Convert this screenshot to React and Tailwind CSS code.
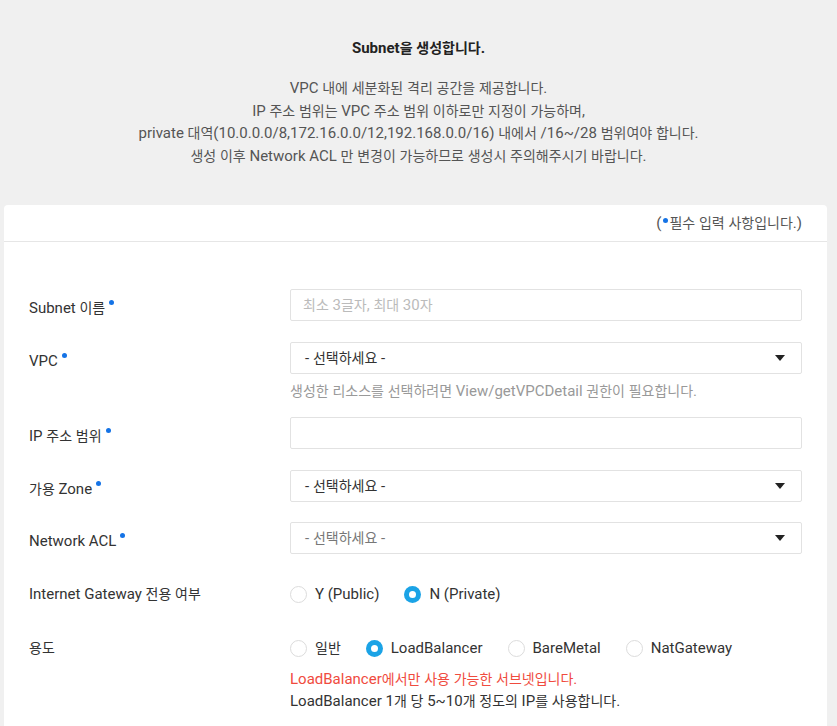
import React from "react";

const font = { fontFamily: 'Roboto, "Noto Sans CJK KR", sans-serif' };

function T({ children }) {
  const parts = String(children).split(/([\u1100-\u11FF\u3130-\u318F\uAC00-\uD7AF]+)/);
  return (
    <>
      {parts.map((p, i) =>
        p === "" ? null : /[\u1100-\u11FF\u3130-\u318F\uAC00-\uD7AF]/.test(p) ? (
          <span key={i} className="text-[14px]">{p}</span>
        ) : (
          <span key={i} className="text-[15px] whitespace-pre">{p}</span>
        )
      )}
    </>
  );
}

function Dot() {
  return <span className="inline-block w-[5px] h-[5px] rounded-full bg-[#1473e6] ml-[4px] relative top-[-5px]" />;
}

function Label({ children, req = true }) {
  return (
    <div className={req ? "w-[261px] shrink-0 text-[#333] flex items-center pt-[5px]" : "w-[261px] shrink-0 text-[#333] flex items-center"}>
      <span><T>{children}</T></span>
      {req && <Dot />}
    </div>
  );
}

function Arrow() {
  return (
    <svg width="10" height="7" viewBox="0 0 10 7" className="absolute right-[16px] top-1/2 -translate-y-1/2">
      <path d="M0 0.5 L10 0.5 L5 6.5 Z" fill="#222" />
    </svg>
  );
}

function Select({ dim }) {
  return (
    <div className="relative flex-1 h-[32px] border border-[#e2e2e2] rounded-[2px] bg-white flex items-center pl-[14px]">
      <span className={dim ? "text-[#777]" : "text-[#333]"}><T>- 선택하세요 -</T></span>
      <Arrow />
    </div>
  );
}

function Radio({ checked, label }) {
  return (
    <div className="flex items-center mr-[25px]">
      {checked ? (
        <span className="w-[17px] h-[17px] rounded-full bg-[#1ba3e6] flex items-center justify-center">
          <span className="w-[7px] h-[7px] rounded-full bg-white" />
        </span>
      ) : (
        <span className="w-[17px] h-[17px] rounded-full border border-[#dcdcdc] bg-white" />
      )}
      <span className="ml-[8px] text-[#333]"><T>{label}</T></span>
    </div>
  );
}

export default function App() {
  return (
    <div className="min-h-[726px] bg-[#f0f0f0] overflow-hidden text-[14px]" style={font}>
      <div className="pt-[38px] text-center">
        <div className="font-bold text-[#222] leading-[20px]"><T>Subnet을 생성합니다.</T></div>
        <div className="mt-[19px] text-[#555] leading-[22.6px]">
          <div><T>VPC 내에 세분화된 격리 공간을 제공합니다.</T></div>
          <div><T>IP 주소 범위는 VPC 주소 범위 이하로만 지정이 가능하며,</T></div>
          <div><T>private 대역(10.0.0.0/8,172.16.0.0/12,192.168.0.0/16) 내에서 /16~/28 범위여야 합니다.</T></div>
          <div><T>생성 이후 Network ACL 만 변경이 가능하므로 생성시 주의해주시기 바랍니다.</T></div>
        </div>
      </div>
      <div className="mt-[38px] ml-[4px] mr-[10px] bg-white rounded-t-[4px] min-h-[530px]">
        <div className="h-[37px] border-b border-[#e6e6e6] flex items-center justify-end pr-[25px] text-[#555]">
          <span className="text-[15px]">(</span>
          <span className="inline-block w-[5px] h-[5px] rounded-full bg-[#1473e6] ml-[2px] mr-[1px] relative top-[-3px]" />
          <span><T>필수 입력 사항입니다.)</T></span>
        </div>
        <div className="pl-[25px] pr-[25px] pt-[47px]">
          <div className="flex items-center h-[32px]">
            <Label>Subnet 이름</Label>
            <div className="flex-1 h-[32px] border border-[#e2e2e2] rounded-[2px] flex items-center pl-[12px] text-[#bbb]">
              <span><T>최소 3글자, 최대 30자</T></span>
            </div>
          </div>
          <div className="flex items-center h-[32px] mt-[21px]">
            <Label>VPC</Label>
            <Select />
          </div>
          <div className="pl-[261px] mt-[5px] h-[23px] flex items-center text-[#999]">
            <span><T>생성한 리소스를 선택하려면 View/getVPCDetail 권한이 필요합니다.</T></span>
          </div>
          <div className="flex items-center h-[32px] mt-[15px]">
            <Label>IP 주소 범위</Label>
            <div className="flex-1 h-[32px] border border-[#e2e2e2] rounded-[2px]" />
          </div>
          <div className="flex items-center h-[32px] mt-[21px]">
            <Label>가용 Zone</Label>
            <Select />
          </div>
          <div className="flex items-center h-[32px] mt-[20px]">
            <Label>Network ACL</Label>
            <Select dim />
          </div>
          <div className="flex items-center h-[32px] mt-[24px]">
            <Label req={false}>Internet Gateway 전용 여부</Label>
            <div className="flex items-center">
              <Radio label="Y (Public)" />
              <Radio checked label="N (Private)" />
            </div>
          </div>
          <div className="flex items-center h-[32px] mt-[22px]">
            <Label req={false}>용도</Label>
            <div className="flex items-center">
              <Radio label="일반" />
              <Radio checked label="LoadBalancer" />
              <Radio label="BareMetal" />
              <Radio label="NatGateway" />
            </div>
          </div>
          <div className="pl-[261px] mt-[4px] leading-[22px]">
            <div className="text-[#f04b3e]"><T>LoadBalancer에서만 사용 가능한 서브넷입니다.</T></div>
            <div className="text-[#333]"><T>LoadBalancer 1개 당 5~10개 정도의 IP를 사용합니다.</T></div>
          </div>
        </div>
      </div>
    </div>
  );
}
